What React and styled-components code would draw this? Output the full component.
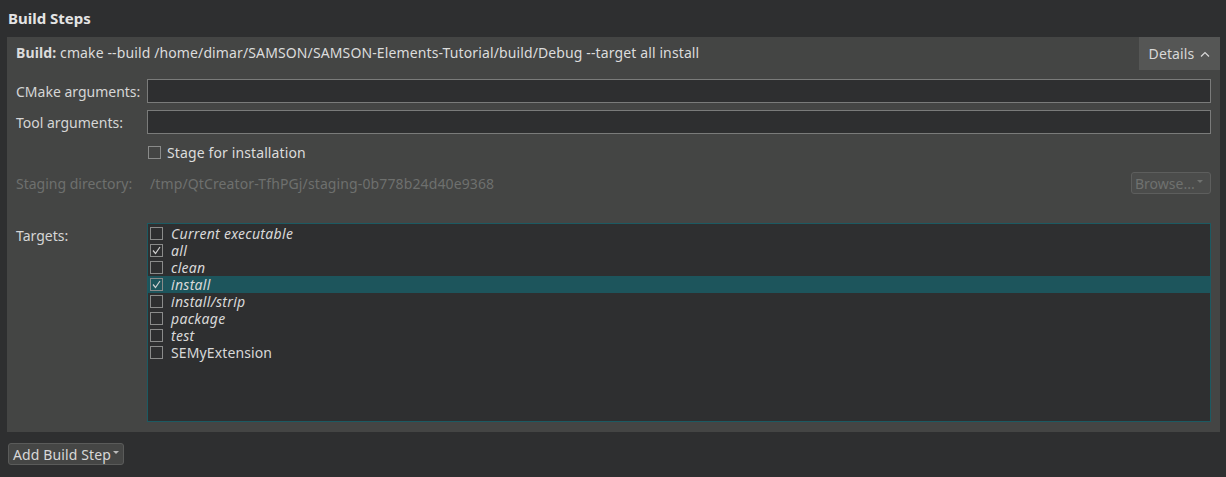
import React from 'react'
import styled, { createGlobalStyle } from 'styled-components'

const Global = createGlobalStyle`
  html, body {
    margin: 0;
    padding: 0;
    background: #2e2f30;
  }
  body {
    font-family: "Noto Sans", "Open Sans", sans-serif;
    font-size: 14px;
    letter-spacing: 0.12px;
    color: #dcdcdc;
  }
`

const Page = styled.div`
  width: 1226px;
  height: 477px;
  padding: 0 6px 0 7px;
  box-sizing: border-box;
  overflow: hidden;
`
const Title = styled.h2`
  margin: 0;
  padding: 8px 0 0 1px;
  height: 37px;
  box-sizing: border-box;
  font-size: 15px;
  font-weight: 700;
  letter-spacing: 0;
  color: #e4e4e4;
`
const Panel = styled.div`
  background: #444544;
  height: 395px;
  display: flex;
  flex-direction: column;
`
const Header = styled.div`
  display: flex;
  align-items: stretch;
  justify-content: space-between;
  height: 33px;
`
const Summary = styled.div`
  padding: 6px 0 0 9px;
  color: #dcdcdc;
  b { font-weight: 700; }
`
const DetailsButton = styled.div`
  background: #555655;
  width: 81px;
  display: flex;
  align-items: center;
  justify-content: center;
  gap: 6px;
  color: #d8d8d8;
`
const Form = styled.div`
  display: grid;
  grid-template-columns: 131px 1fr;
  padding: 9px 9px 0 9px;
  row-gap: 7px;
  align-items: center;
`
const Label = styled.div`
  color: ${p => (p.$disabled ? '#6e706e' : '#d6d6d6')};
  align-self: ${p => (p.$top ? 'start' : 'center')};
  padding-top: ${p => (p.$top ? '3px' : '0')};
  letter-spacing: 0;
`
const Input = styled.div`
  height: 24px;
  box-sizing: border-box;
  border: 1px solid #7a7b7a;
  background: #2e2f30;
`
const CheckRow = styled.label`
  display: flex;
  align-items: center;
  gap: 6px;
  height: 24px;
  padding-left: 1px;
  margin-top: -1px;
`
const Box = styled.span`
  width: 11px;
  height: 11px;
  border: 1px solid #8a8b8a;
  display: inline-flex;
  align-items: center;
  justify-content: center;
  flex: none;
  background: transparent;
`
const StagingRow = styled.div`
  display: flex;
  align-items: center;
  justify-content: space-between;
  height: 24px;
  color: #6e706e;
  padding-left: 3px;
`
const Browse = styled.div`
  width: 80px;
  height: 22px;
  box-sizing: border-box;
  border: 1px solid #5d5e5d;
  border-radius: 3px;
  background: #4b4c4b;
  color: #6f716f;
  display: flex;
  align-items: center;
  padding-left: 3px;
  gap: 2px;
  letter-spacing: 0;
`
const Caret = styled.span`
  width: 0;
  height: 0;
  border-left: 3px solid transparent;
  border-right: 3px solid transparent;
  border-top: 3px solid ${p => p.$color || '#bbb'};
  margin-top: -4px;
`
const Spacer = styled.div`
  height: ${p => p.$h}px;
`
const List = styled.div`
  height: 199px;
  box-sizing: border-box;
  border: 1px solid #1c5a62;
  background: #2e2f30;
  padding-top: 1px;
`
const Row = styled.div`
  height: 17px;
  display: flex;
  align-items: center;
  gap: 8px;
  padding-left: 2px;
  background: ${p => (p.$selected ? '#1d555c' : 'transparent')};
  font-style: ${p => (p.$italic ? 'italic' : 'normal')};
  letter-spacing: ${p => (p.$italic ? '0.3px' : '0.12px')};
  color: #d8d8d8;
`
const Footer = styled.div`
  padding: 11px 0 0 1px;
`
const AddButton = styled.div`
  display: inline-flex;
  align-items: center;
  gap: 2px;
  height: 22px;
  box-sizing: border-box;
  padding: 0 4px 0 4px;
  border: 1px solid #5a5b5a;
  border-radius: 3px;
  background: #454645;
  color: #d8d8d8;
`

const Check = ({ checked }) => (
  <Box>
    {checked && (
      <svg width="9" height="9" viewBox="0 0 9 9">
        <path d="M1 4.5 L3.5 7.5 L8 1" fill="none" stroke="#d0d0d0" strokeWidth="1.2" />
      </svg>
    )}
  </Box>
)

const targets = [
  { name: 'Current executable', italic: true },
  { name: 'all', italic: true, checked: true },
  { name: 'clean', italic: true },
  { name: 'install', italic: true, checked: true, selected: true },
  { name: 'install/strip', italic: true },
  { name: 'package', italic: true },
  { name: 'test', italic: true },
  { name: 'SEMyExtension' },
]

export default function App() {
  return (
    <Page>
      <Global />
      <Title>Build Steps</Title>
      <Panel>
        <Header>
          <Summary>
            <b>Build:</b> cmake --build /home/dimar/SAMSON/SAMSON-Elements-Tutorial/build/Debug --target all install
          </Summary>
          <DetailsButton>
            Details
            <svg width="10" height="6" viewBox="0 0 10 6">
              <path d="M1 5.5 L5 1.5 L9 5.5" fill="none" stroke="#d8d8d8" strokeWidth="1.2" />
            </svg>
          </DetailsButton>
        </Header>
        <Form>
          <Label>CMake arguments:</Label>
          <Input />
          <Label>Tool arguments:</Label>
          <Input />
          <div />
          <CheckRow>
            <Check />
            Stage for installation
          </CheckRow>
          <Label $disabled>Staging directory:</Label>
          <StagingRow>
            /tmp/QtCreator-TfhPGj/staging-0b778b24d40e9368
            <Browse>
              Browse...
              <Caret $color="#6f716f" />
            </Browse>
          </StagingRow>
        </Form>
        <Spacer $h={19} />
        <Form>
          <Label $top>Targets:</Label>
          <List>
            {targets.map(t => (
              <Row key={t.name} $italic={t.italic} $selected={t.selected}>
                <Check checked={t.checked} />
                {t.name}
              </Row>
            ))}
          </List>
        </Form>
      </Panel>
      <Footer>
        <AddButton>
          Add Build Step
          <Caret $color="#bbb" />
        </AddButton>
      </Footer>
    </Page>
  )
}
